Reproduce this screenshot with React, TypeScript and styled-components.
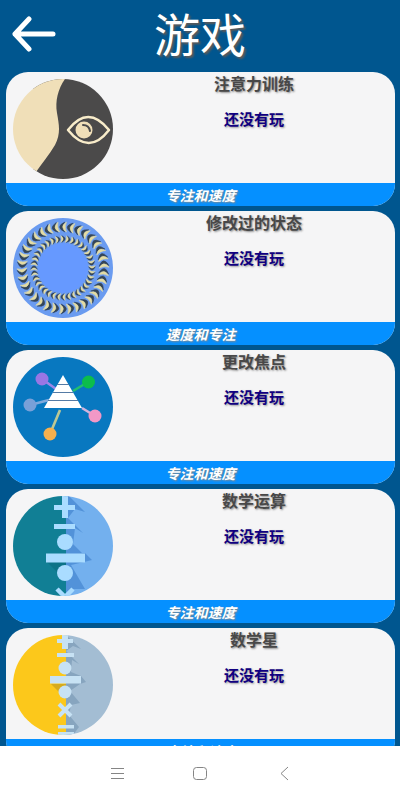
import React from "react";
import styled, { createGlobalStyle } from "styled-components";

const GlobalStyle = createGlobalStyle`
  *, *::before, *::after { box-sizing: border-box; }
  body {
    margin: 0;
    background: #00568f;
    font-family: Roboto, "Noto Sans CJK SC", sans-serif;
  }
  button {
    border: 0;
    padding: 0;
    background: none;
    color: inherit;
    font: inherit;
    cursor: pointer;
  }
  svg { display: block; }
`;

const Screen = styled.div`
  display: flex;
  flex-direction: column;
  height: 100vh;
  background: #00568f;
`;

const Header = styled.header`
  display: grid;
  grid-template-columns: 56px 1fr 56px;
  align-items: center;
  flex: none;
  height: 72px;
`;

const BackButton = styled.button`
  justify-self: end;
  padding-bottom: 4px;
`;

const Title = styled.h1`
  margin: 0;
  color: #fff;
  font-size: 46px;
  font-weight: 400;
  line-height: 72px;
  text-align: center;
  text-shadow: 2px 2px 2px #5a5a5a;
`;

const GameList = styled.main`
  display: flex;
  flex: 1;
  flex-direction: column;
  gap: 5px;
  min-height: 0;
  padding: 0 5px 5px 6px;
  overflow-y: auto;
  scrollbar-width: none;
`;

const GameCard = styled.button`
  flex: none;
  border-radius: 22px;
  background: #f5f5f6;
  overflow: hidden;
`;

const CardBody = styled.span`
  display: flex;
  height: 111px;
  padding: 7px 0 0 7px;
`;

const CardText = styled.span`
  display: flex;
  flex: 1;
  flex-direction: column;
  align-items: center;
  gap: 10px;
  margin-top: -7px;
`;

const GameName = styled.span`
  color: #484848;
  font-size: 16px;
  font-weight: 700;
  line-height: 26px;
  text-shadow: 1px 1px 2px #888;
`;

const GameStatus = styled.span`
  color: #100080;
  font-size: 15px;
  font-weight: 700;
  line-height: 24px;
  text-shadow: 1px 1px 2px #999;
`;

const CardFooter = styled.span`
  display: block;
  height: 23px;
  background: #0590ff;
  color: #fff;
  font-size: 14px;
  font-style: italic;
  font-weight: 700;
  line-height: 26px;
  text-align: center;
  text-shadow: 1px 1px 2px #888;
`;

const SystemBar = styled.nav`
  display: flex;
  flex: none;
  align-items: center;
  justify-content: center;
  gap: 60px;
  height: 54px;
  background: #fff;
`;

const SystemButton = styled.button`
  width: 24px;
  height: 24px;
`;

const Badge = ({ id, children }: { id: string; children: React.ReactNode }) => (
  <svg width="100" height="100" viewBox="0 0 100 100" aria-hidden="true">
    <clipPath id={id}>
      <circle cx="50" cy="50" r="50" />
    </clipPath>
    <g clipPath={`url(#${id})`}>{children}</g>
  </svg>
);

const AttentionIcon = () => (
  <Badge id="attention">
    <rect x="20" width="80" height="100" fill="#4b4a4a" />
    <path d="M0 0H52C45 10 42 22 44 34C46 46 48 54 42 66C36 76 29 84 23 93L18 100H0Z" fill="#f0dfb8" />
    <path d="M55 51Q75 25 96 51Q76 77 55 51Z" fill="none" stroke="#f8ecca" strokeWidth="2.5" strokeLinejoin="round" />
    <circle cx="71" cy="51" r="8.5" fill="#f0dfb8" />
    <path d="M70 46Q76 46 77 52" fill="none" stroke="#4b4a4a" strokeWidth="2" strokeLinecap="round" />
  </Badge>
);

const Ring = ({ radius, size, count, flip }: { radius: number; size: number; count: number; flip: number }) => (
  <>
    {Array.from({ length: count }, (_, i) => (
      <g key={i} transform={`rotate(${(i * 360) / count} 50 50) translate(50 ${50 - radius}) scale(${size * flip} ${size})`}>
        <path d="M-.35 -1Q1.7 0 -.35 1Q.3 0 -.35 -1Z" fill="#34465a" stroke="#34465a" strokeWidth=".1" />
        <path d="M-.7 -1Q.85 0 -.7 1Q-.25 0 -.7 -1Z" fill="#e4dca4" stroke="#e4dca4" strokeWidth=".1" />
      </g>
    ))}
  </>
);

const StateIcon = () => (
  <Badge id="state">
    <rect width="100" height="100" fill="#6a9bf0" />
    <circle cx="50" cy="50" r="25" fill="#6699ff" />
    <Ring radius={41} size={5} count={34} flip={-1} />
    <Ring radius={29} size={3.4} count={36} flip={1} />
  </Badge>
);

const FocusIcon = () => (
  <Badge id="focus">
    <rect width="100" height="100" fill="#0878c0" />
    <g strokeWidth="2.6">
      <path d="M29 22L43 32" stroke="#9b86e8" />
      <path d="M75 25L60 34" stroke="#22bf6e" />
      <path d="M17 48L36 43" stroke="#7fa9dc" />
      <path d="M82 59L69 51" stroke="#d3b4dc" />
      <path d="M37 77L47 53" stroke="#bdc894" />
    </g>
    <circle cx="29" cy="22" r="6.5" fill="#9876e4" />
    <circle cx="75.5" cy="25" r="6.5" fill="#0cbd4c" />
    <circle cx="17" cy="48" r="6.5" fill="#79a0d8" />
    <circle cx="82" cy="59" r="6.5" fill="#f298c6" />
    <circle cx="37" cy="77" r="6.5" fill="#f6b04e" />
    <path d="M50 18L69 51H31Z" fill="#fff" />
    <path d="M44 27.5H56M40 35.5H60M35 43.5H65" stroke="#557ba5" />
  </Badge>
);

const OperationsIcon = () => (
  <Badge id="operations">
    <rect width="53" height="100" fill="#117f95" />
    <rect x="53" width="47" height="100" fill="#73b0ee" />
    <path d="M53 0H56L72 16L62 13L55 22L70 37L62 32L60 48L69 57H72L79 64L71 66L58 69L72 93L59 93L53 100Z" fill="#3c7fcc" opacity=".6" />
    <path d="M34 66L53 85V66Z" fill="#0a687c" opacity=".5" />
    <g fill="#aadcff">
      <path d="M49 0H55V9H62V14H55V22H49V14H41V9H49Z" />
      <rect x="41" y="28" width="21" height="5" />
      <circle cx="52" cy="46" r="8" />
      <rect x="33" y="57.5" width="39" height="9" />
      <circle cx="52" cy="77" r="8" />
    </g>
    <path d="M44 93L60 109M60 93L44 109" stroke="#aadcff" strokeWidth="4.5" />
  </Badge>
);

const StarIcon = () => (
  <Badge id="star">
    <rect width="53" height="100" fill="#fcc81b" />
    <rect x="53" width="47" height="100" fill="#a3bdd3" />
    <path d="M53 0L68 14L60 11L53 16L66 29L59 25L58 37L68 41L73 47L67 49L57 56L67 68L58 70L56 80L66 92L60 100H53Z" fill="#7898b4" opacity=".65" />
    <path d="M38 49L53 64V49Z" fill="#bd9720" opacity=".6" />
    <g fill="#c7e2f4">
      <path d="M49 0H55V4H60V8H55V14H49V8H44V4H49Z" />
      <rect x="44" y="18" width="17" height="4" />
      <circle cx="52" cy="33" r="6.5" />
      <rect x="37" y="41" width="31" height="7.5" />
      <circle cx="52" cy="57" r="6.5" />
      <rect x="45" y="90" width="16" height="3.5" />
      <rect x="45" y="97" width="16" height="3" />
    </g>
    <path d="M46 69L58 81M58 69L46 81" stroke="#c7e2f4" strokeWidth="4" />
  </Badge>
);

const games = [
  { name: "注意力训练", skills: "专注和速度", Icon: AttentionIcon },
  { name: "修改过的状态", skills: "速度和专注", Icon: StateIcon },
  { name: "更改焦点", skills: "专注和速度", Icon: FocusIcon },
  { name: "数学运算", skills: "专注和速度", Icon: OperationsIcon },
  { name: "数学星", skills: "专注和速度", Icon: StarIcon },
];

export default function App() {
  return (
    <Screen>
      <GlobalStyle />
      <Header>
        <BackButton aria-label="返回">
          <svg width="44" height="38" viewBox="0 0 44 38" fill="none" stroke="#fff" strokeWidth="5" strokeLinecap="round" strokeLinejoin="round">
            <path d="M17 4L3 19L17 34M3 19H41" />
          </svg>
        </BackButton>
        <Title>游戏</Title>
      </Header>
      <GameList>
        {games.map(({ name, skills, Icon }) => (
          <GameCard key={name}>
            <CardBody>
              <Icon />
              <CardText>
                <GameName>{name}</GameName>
                <GameStatus>还没有玩</GameStatus>
              </CardText>
            </CardBody>
            <CardFooter>{skills}</CardFooter>
          </GameCard>
        ))}
      </GameList>
      <SystemBar>
        <SystemButton aria-label="菜单">
          <svg width="24" height="24" viewBox="0 0 24 24" fill="none" stroke="#858585">
            <path d="M7 7.5H20M7 12.5H20M7 17.5H20" />
          </svg>
        </SystemButton>
        <SystemButton aria-label="主页">
          <svg width="24" height="24" viewBox="0 0 24 24" fill="none" stroke="#858585">
            <rect x="5.5" y="6.5" width="13" height="12" rx="3" />
          </svg>
        </SystemButton>
        <SystemButton aria-label="后退">
          <svg width="24" height="24" viewBox="0 0 24 24" fill="none" stroke="#858585">
            <path d="M16 6L9 12.5L16 19" />
          </svg>
        </SystemButton>
      </SystemBar>
    </Screen>
  );
}
